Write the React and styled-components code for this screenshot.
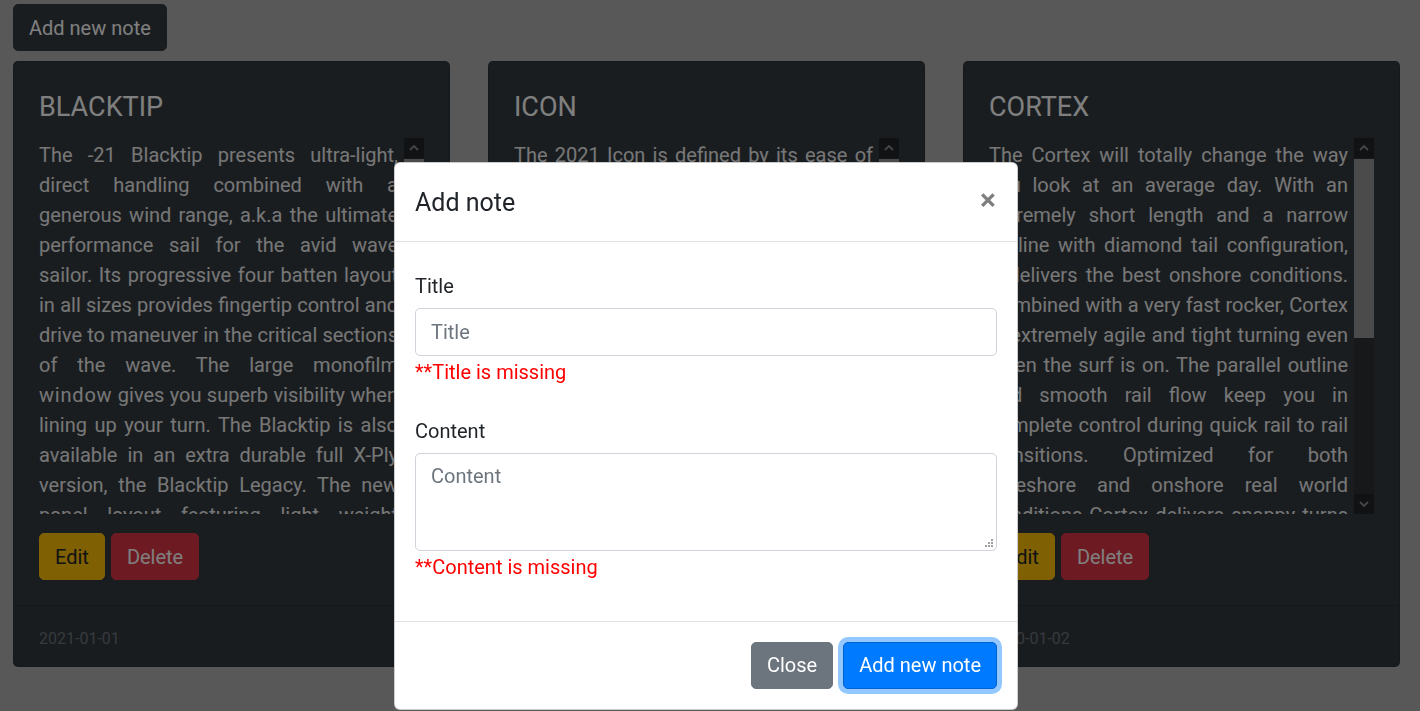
import styled, { createGlobalStyle, css } from "styled-components"

const GlobalStyle = createGlobalStyle`
  body {
    margin: 0;
    background-color: #b0b0b0;
    font-family: Roboto, "Liberation Sans", sans-serif;
    font-size: 20px;
    color: #212529;
  }
  * { box-sizing: border-box; }
`

const variants = {
  dark: css`background-color: #343a40; border-color: #343a40; color: #fff;`,
  warning: css`background-color: #ffc107; border-color: #ffc107; color: #212529;`,
  danger: css`background-color: #dc3545; border-color: #dc3545; color: #fff;`,
  secondary: css`background-color: #6c757d; border-color: #6c757d; color: #fff;`,
  primary: css`
    background-color: #007bff;
    border-color: #0062cc;
    color: #fff;
    box-shadow: 0 0 0 5px rgba(38, 143, 255, 0.5);
  `,
}

const Btn = styled.button`
  font-family: inherit;
  font-size: 20px;
  line-height: 30px;
  padding: 7.5px 15px;
  border: 1px solid transparent;
  border-radius: 5px;
  ${(p) => variants[p.$variant]}
`

const Page = styled.div`
  padding: 4px 20px 0 13px;
`

const CardGrid = styled.div`
  display: grid;
  grid-template-columns: repeat(3, 437px);
  column-gap: 38px;
  margin-top: 10px;
`

const Card = styled.div`
  display: flex;
  flex-direction: column;
  background-color: #343a40;
  border: 1px solid rgba(0, 0, 0, 0.125);
  border-radius: 5px;
  color: #fff;
`

const CardBody = styled.div`
  padding: 25px;
`

const CardTitle = styled.h4`
  margin: 0 0 15px;
  padding-top: 2px;
  height: 36px;
  font-size: 27px;
  font-weight: 400;
  line-height: 36px;
`

const ScrollArea = styled.div`
  display: flex;
  height: 376px;
`

const TextPane = styled.div`
  flex: 1;
  overflow: hidden;
  padding: 2px 6px 0 0;
  text-align: justify;
  line-height: 30px;
  color: #eeeeee;
`

// a hair wider so the word wraps where the original font wraps it
const Nudge = styled.span`
  letter-spacing: 0.8px;
`

const ScrollTrack = styled.div`
  display: flex;
  flex-direction: column;
  width: 20px;
  background-color: #2e3135;
`

const ScrollButton = styled.div`
  display: flex;
  align-items: center;
  justify-content: center;
  height: 20px;
  background-color: #222427;
`

const ScrollRail = styled.div`
  flex: 1;
  padding-top: 1px;
`

const ScrollThumb = styled.div`
  height: ${(p) => p.$size}px;
  background-color: #979797;
`

const Actions = styled.div`
  display: flex;
  gap: 6px;
  margin-top: 19px;
`

const CardFooter = styled.div`
  padding: 18px 25px 12px;
  border-top: 1px solid rgba(0, 0, 0, 0.125);
  background-color: rgba(0, 0, 0, 0.03);
  font-size: 16px;
  line-height: 30px;
  color: #6c757d;
`

const Backdrop = styled.div`
  position: fixed;
  inset: 0;
  background-color: rgba(0, 0, 0, 0.5);
`

const ModalLayer = styled.div`
  position: fixed;
  inset: 0;
  padding: 162px 0 0 394px;
`

const Modal = styled.div`
  width: 624px;
  background-color: #fff;
  border: 1px solid rgba(0, 0, 0, 0.2);
  border-radius: 6px;
`

const ModalHeader = styled.div`
  display: flex;
  align-items: flex-start;
  padding: 21px 20px 19px;
  border-bottom: 1px solid #dee2e6;
`

const ModalTitle = styled.h5`
  margin: 0;
  font-size: 25px;
  font-weight: 400;
  line-height: 37.5px;
`

const CloseX = styled.button`
  margin: -21px -19px -19px auto;
  padding: 22px 20px 18px;
  background: transparent;
  border: 0;
  font-family: inherit;
  font-size: 30px;
  font-weight: 700;
  line-height: 30px;
  color: #000;
  opacity: 0.5;
`

const ModalBody = styled.div`
  padding: 29px 20px 39px;
`

const Field = styled.div`
  & + & {
    margin-top: 29px;
  }
`

const Label = styled.label`
  display: block;
  margin-bottom: 7px;
  line-height: 30px;
`

const inputBase = css`
  display: block;
  width: 100%;
  font-family: inherit;
  font-size: 20px;
  line-height: 30px;
  padding: 7.5px 15px;
  color: #495057;
  border: 1px solid #ced4da;
  border-radius: 5px;

  &::placeholder {
    color: #6c757d;
  }
`

const Input = styled.input`
  ${inputBase}
  height: 48px;
`

const AreaWrap = styled.div`
  position: relative;
`

const TextArea = styled.textarea`
  ${inputBase}
  height: 98px;
  resize: none;
`

const Grip = styled.svg`
  position: absolute;
  right: 3px;
  bottom: 3px;
`

const ErrorText = styled.div`
  margin-top: 1px;
  line-height: 30px;
  color: #ff0000;
`

const ModalFooter = styled.div`
  display: flex;
  justify-content: flex-end;
  gap: 10px;
  padding: 20px;
  border-top: 1px solid #dee2e6;
`

const Chevron = ({ down }) => (
  <svg width="10" height="6" viewBox="0 0 10 6">
    <path
      d={down ? "M1 1 L5 5 L9 1" : "M1 5 L5 1 L9 5"}
      fill="none"
      stroke="#8d8d8d"
      strokeWidth="1.8"
    />
  </svg>
)

const notes = [
  {
    title: "BLACKTIP",
    date: "2021-01-01",
    thumb: 179,
    text: (
      <>
        The -21 Blacktip presents ultra-light, direct handling combined with a
        generous wind range, a.k.a the ultimate performance sail for the avid
        wave sailor. Its progressive four batten layout in all sizes provides
        fingertip control and drive to maneuver in the critical sections of the
        wave. The large monofilm <Nudge>window</Nudge> gives you superb
        visibility when lining up your turn. The Blacktip is also available in
        an extra durable full X-Ply version, the Blacktip Legacy. The new panel
        layout featuring light weight materials keeps the sail light and
        responsive in every condition.
      </>
    ),
  },
  {
    title: "ICON",
    date: "2021-01-03",
    thumb: 190,
    text: "The 2021 Icon is defined by its ease of use, control and all round performance. Its compact outline and soft rails make it a forgiving board for riders progressing in the waves, while the refined rocker line gives early planing and speed in light winds. Whether you are cruising on flat water or jumping your first waves, the Icon delivers confidence in every condition and keeps you on the water for longer sessions.",
  },
  {
    title: "CORTEX",
    date: "2020-01-02",
    thumb: 179,
    text: "The Cortex will totally change the way you look at an average day. With an extremely short length and a narrow outline with diamond tail configuration, it delivers the best onshore conditions. Combined with a very fast rocker, Cortex is extremely agile and tight turning even when the surf is on. The parallel outline and smooth rail flow keep you in complete control during quick rail to rail transitions. Optimized for both sideshore and onshore real world conditions Cortex delivers snappy turns and loads of fun in every session.",
  },
]

const App = () => {
  return (
    <>
      <GlobalStyle />
      <Page>
        <Btn $variant="dark">Add new note</Btn>
        <CardGrid>
          {notes.map((note) => (
            <Card key={note.title}>
              <CardBody>
                <CardTitle>{note.title}</CardTitle>
                <ScrollArea>
                  <TextPane>{note.text}</TextPane>
                  <ScrollTrack>
                    <ScrollButton>
                      <Chevron />
                    </ScrollButton>
                    <ScrollRail>
                      <ScrollThumb $size={note.thumb} />
                    </ScrollRail>
                    <ScrollButton>
                      <Chevron down />
                    </ScrollButton>
                  </ScrollTrack>
                </ScrollArea>
                <Actions>
                  <Btn $variant="warning">Edit</Btn>
                  <Btn $variant="danger">Delete</Btn>
                </Actions>
              </CardBody>
              <CardFooter>{note.date}</CardFooter>
            </Card>
          ))}
        </CardGrid>
      </Page>

      <Backdrop />
      <ModalLayer>
        <Modal>
          <ModalHeader>
            <ModalTitle>Add note</ModalTitle>
            <CloseX>×</CloseX>
          </ModalHeader>
          <ModalBody>
            <Field>
              <Label>Title</Label>
              <Input placeholder="Title" />
              <ErrorText>**Title is missing</ErrorText>
            </Field>
            <Field>
              <Label>Content</Label>
              <AreaWrap>
                <TextArea placeholder="Content" />
                <Grip width="10" height="10" viewBox="0 0 10 10">
                  <g fill="#a0a0a0">
                    <rect x="7" y="1" width="2" height="2" />
                    <rect x="4" y="4" width="2" height="2" />
                    <rect x="7" y="4" width="2" height="2" />
                    <rect x="1" y="7" width="2" height="2" />
                    <rect x="4" y="7" width="2" height="2" />
                    <rect x="7" y="7" width="2" height="2" />
                  </g>
                </Grip>
              </AreaWrap>
              <ErrorText>**Content is missing</ErrorText>
            </Field>
          </ModalBody>
          <ModalFooter>
            <Btn $variant="secondary">Close</Btn>
            <Btn $variant="primary">Add new note</Btn>
          </ModalFooter>
        </Modal>
      </ModalLayer>
    </>
  )
}

export default App
